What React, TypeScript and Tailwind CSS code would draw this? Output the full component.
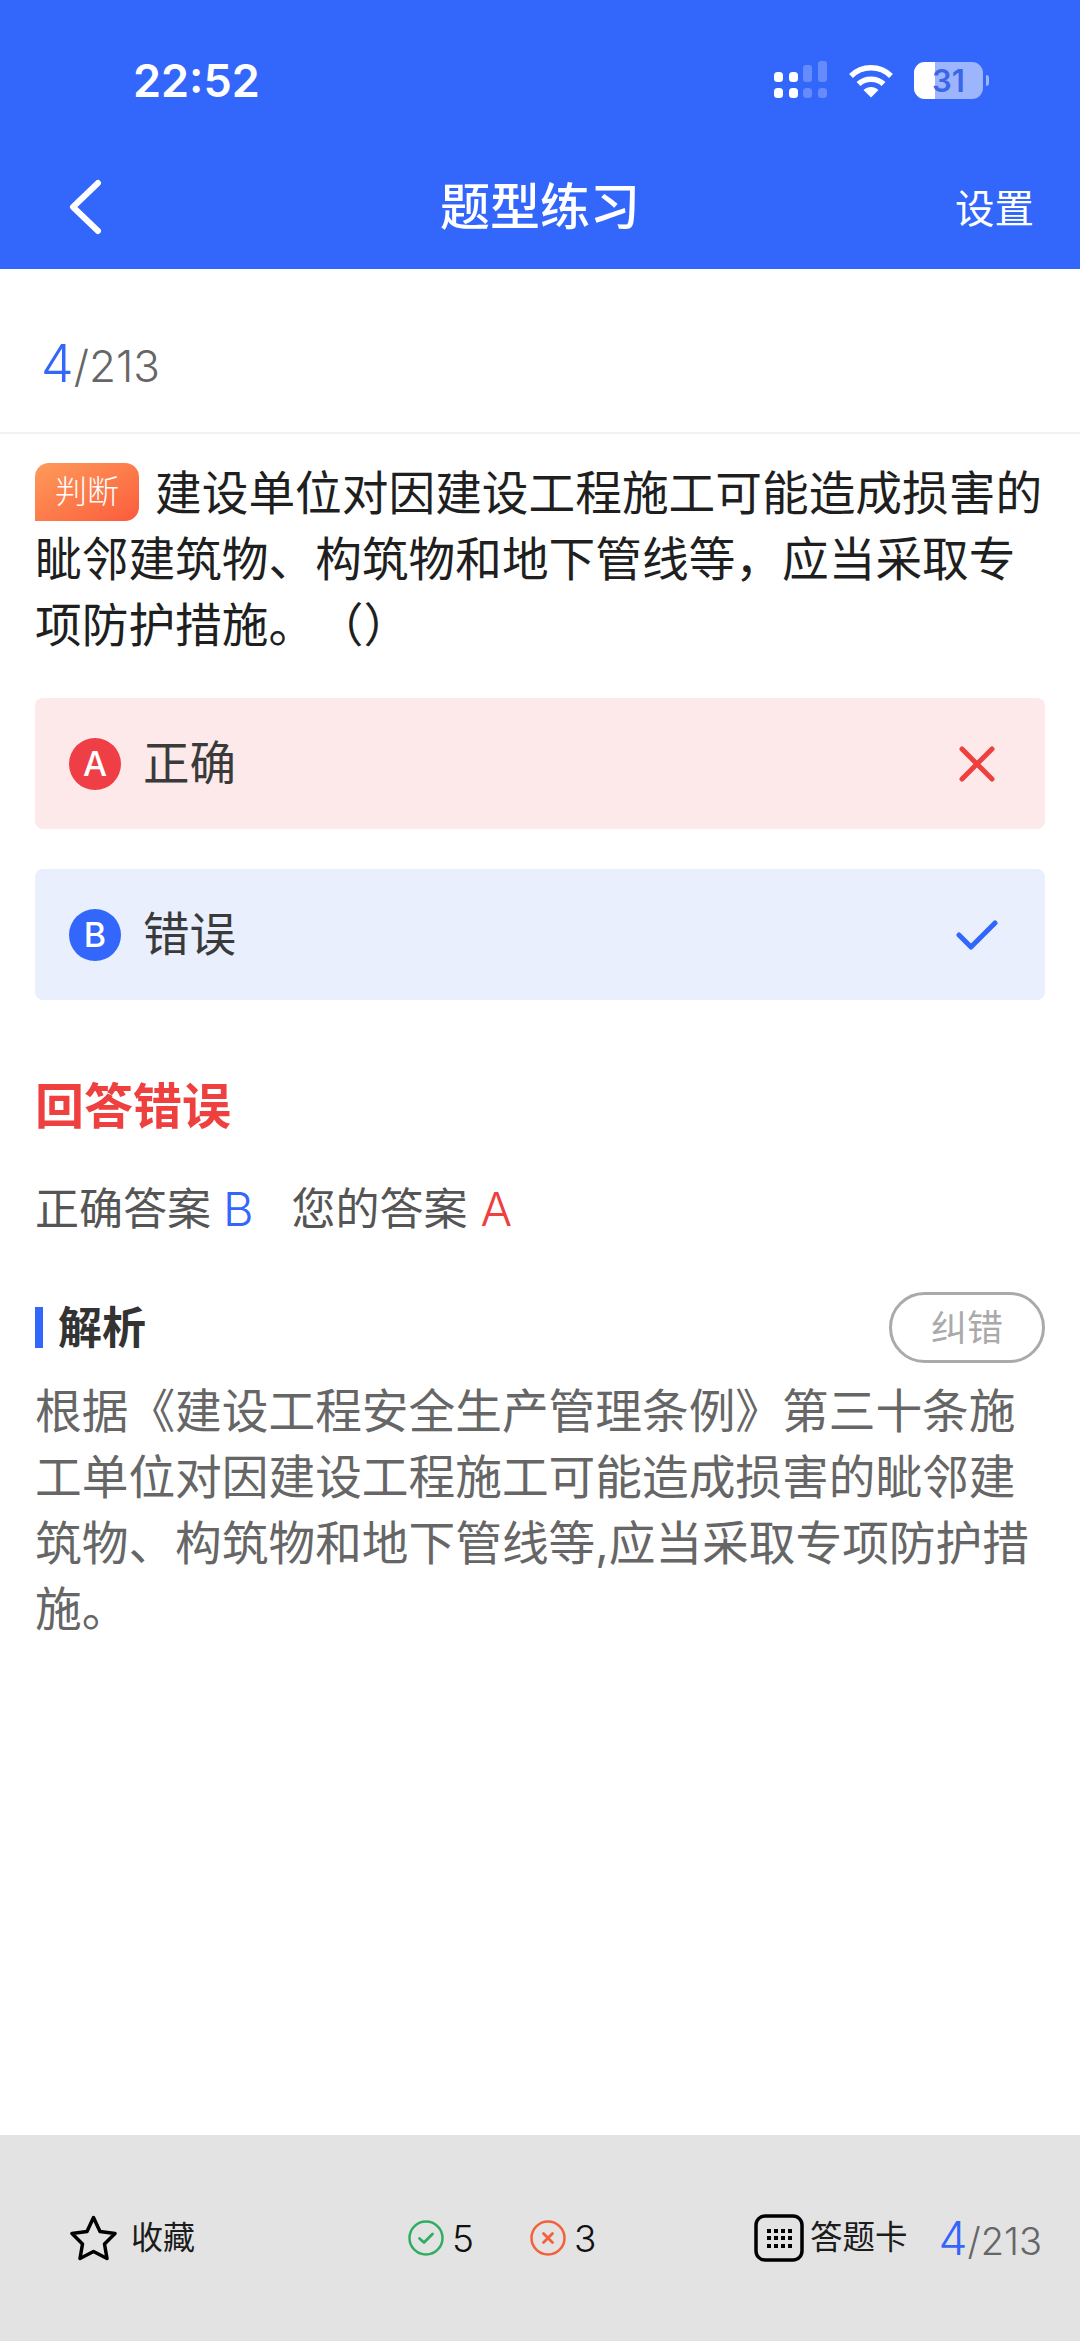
import React from "react";

const FONT = 'Inter, "Noto Sans CJK SC", sans-serif';

function Signal() {
  return (
    <svg width="54" height="38" viewBox="0 0 54 38" fill="#fff">
      <rect x="0" y="11" width="9" height="10" rx="3.5" />
      <rect x="15" y="11" width="9" height="10" rx="3.5" />
      <rect x="29" y="4" width="9" height="17" rx="3" opacity="0.25" />
      <rect x="44" y="0" width="9" height="21" rx="3" opacity="0.25" />
      <rect x="0" y="27" width="9" height="10" rx="3.5" />
      <rect x="15" y="27" width="9" height="10" rx="3.5" />
      <rect x="29" y="27" width="9" height="10" rx="3.5" opacity="0.25" />
      <rect x="44" y="27" width="9" height="10" rx="3.5" opacity="0.25" />
    </svg>
  );
}

function Wifi() {
  return (
    <svg width="46" height="35" viewBox="0 0 46 35" fill="none" stroke="#fff" strokeWidth="5.5">
      <path d="M3 13 C14 2 32 2 43 13" />
      <path d="M10.5 21 C17 14.5 29 14.5 35.5 21" />
      <path d="M15.5 27 L23 34.5 L30.5 27 C26 23 20 23 15.5 27 Z" fill="#fff" stroke="none" />
    </svg>
  );
}

function Battery() {
  return (
    <div className="relative flex items-center">
      <div className="relative flex h-[37px] w-[69px] items-center justify-center overflow-hidden rounded-[11px] bg-[#9db5fc]">
        <div className="absolute inset-y-0 left-0 w-[21px] bg-white" />
        <span className="relative text-[31px] font-semibold leading-none text-[#3a66ea]">31</span>
      </div>
      <div className="ml-[3px] h-[11px] w-[3px] rounded-r-full bg-[#9db5fc]" />
    </div>
  );
}

function Option({ letter, label, tone, icon }: { letter: string; label: string; tone: "red" | "blue"; icon: React.ReactNode }) {
  const red = tone === "red";
  return (
    <div className={`flex h-[131px] items-center rounded-[8px] pl-[34px] pr-[47px] ${red ? "bg-[#fde9e9]" : "bg-[#e9effd]"}`}>
      <div className={`flex h-[52px] w-[52px] items-center justify-center rounded-full text-[34px] font-medium leading-none text-white ${red ? "bg-[#ef3e46]" : "bg-[#3366fa]"}`}>
        {letter}
      </div>
      <span className="ml-[22px] text-[46.5px] leading-none text-[#3a3a3a]">{label}</span>
      <div className="ml-auto flex w-[42px] items-center justify-center">{icon}</div>
    </div>
  );
}

export default function App() {
  return (
    <div className="flex h-[2341px] w-[1080px] flex-col overflow-hidden bg-white" style={{ fontFamily: FONT }}>
      <header className="flex h-[269px] shrink-0 flex-col bg-[#3366fa] text-white">
        <div className="mt-[60px] flex h-[40px] items-center justify-between pl-[133px] pr-[91px]">
          <span className="text-[45px] font-semibold leading-none">22:52</span>
          <div className="flex items-center">
            <Signal />
            <div className="ml-[20px]"><Wifi /></div>
            <div className="ml-[20px]"><Battery /></div>
          </div>
        </div>
        <div className="mt-[77px] grid h-[60px] grid-cols-[1fr_auto_1fr] items-center px-[46px]">
          <svg className="ml-[20px]" width="40" height="56" viewBox="0 0 40 56" fill="none" stroke="#fff" strokeWidth="6" strokeLinecap="round" strokeLinejoin="round">
            <path d="M32 4 L7 28 L32 52" />
          </svg>
          <span className="text-[50px] font-medium leading-none">题型练习</span>
          <span className="mt-[5px] justify-self-end text-[39.5px] leading-none">设置</span>
        </div>
      </header>

      <main className="flex min-h-0 flex-1 flex-col">
        <div className="flex h-[165px] items-baseline border-b-2 border-[#f2f2f2] pl-[41px] pt-[69px] leading-none">
          <span className="text-[52px] font-light leading-none text-[#3366fa]">4</span>
          <span className="text-[44px] font-light leading-none text-[#666]">/213</span>
        </div>

        <div className="px-[35px]">
          <p className="mt-[26px] text-[46.7px] leading-[66px] text-[#1f1f1f]">
            <span className="mr-[16px] mt-[3px] inline-flex h-[58px] w-[104px] items-center justify-center rounded-[14px] rounded-bl-none bg-gradient-to-br from-[#fd9a5a] to-[#fb5a3c] align-top text-[32px] font-light leading-none text-white">
              判断
            </span>
            建设单位对因建设工程施工可能造成损害的眦邻建筑物、构筑物和地下管线等，应当采取专项防护措施。<span className="ml-[25px]">（）</span>
          </p>

          <div className="mt-[40px] flex flex-col gap-[40px]">
            <Option
              letter="A"
              label="正确"
              tone="red"
              icon={
                <svg width="36" height="36" viewBox="0 0 36 36" fill="none" stroke="#ef4040" strokeWidth="5" strokeLinecap="round">
                  <path d="M3 3 L33 33 M33 3 L3 33" />
                </svg>
              }
            />
            <Option
              letter="B"
              label="错误"
              tone="blue"
              icon={
                <svg width="42" height="30" viewBox="0 0 42 30" fill="none" stroke="#3366fa" strokeWidth="5" strokeLinecap="round" strokeLinejoin="round">
                  <path d="M3 15 L15 27 L39 3" />
                </svg>
              }
            />
          </div>

          <h2 className="mt-[82px] text-[49px] font-bold leading-none text-[#ef4040]">回答错误</h2>

          <div className="mt-[54px] flex items-center text-[44px] leading-none text-[#555]">
            <span>正确答案</span>
            <span className="ml-[12px] text-[47px] font-light leading-none text-[#3366fa]">B</span>
            <span className="ml-[38px]">您的答案</span>
            <span className="ml-[13px] text-[47px] font-light leading-none text-[#ef4040]">A</span>
          </div>

          <div className="mt-[60px] flex items-center justify-between">
            <div className="flex items-center">
              <div className="h-[41px] w-[8px] bg-[#3366fa]" />
              <span className="ml-[15px] text-[44px] font-bold leading-none text-[#333]">解析</span>
            </div>
            <div className="flex h-[71px] w-[156px] items-center justify-center rounded-full border-[3px] border-[#aaa] text-[36px] leading-none text-[#aaa]">
              纠错
            </div>
          </div>

          <p className="mt-[15px] text-[46.7px] leading-[66px] text-[#666]">
            根据《建设工程安全生产管理条例》第三十条施工单位对因建设工程施工可能造成损害的眦邻建筑物、构筑物和地下管线等,应当采取专项防护措施。
          </p>
        </div>
      </main>

      <footer className="flex h-[206px] shrink-0 bg-[#e3e3e3] pt-[80px]">
        <div className="flex h-[46px] w-full items-center pl-[70px] pr-[38px]">
          <svg width="47" height="46" viewBox="0 0 47 46" fill="none" stroke="#000" strokeWidth="3.5" strokeLinejoin="round">
            <path d="M23.5 2.5 L30 16.5 L45 18.5 L34.5 29 L37 43.5 L23.5 36.5 L10 43.5 L12.5 29 L2 18.5 L17 16.5 Z" />
          </svg>
          <span className="ml-[14px] text-[32px] leading-none text-[#1c1c1c]">收藏</span>

          <svg className="ml-[213px]" width="36" height="36" viewBox="0 0 36 36" fill="none" stroke="#2fae62">
            <circle cx="18" cy="18" r="16.5" strokeWidth="2.5" />
            <path d="M11.5 18.5 L16 22.5 L24.5 14" strokeWidth="2.8" strokeLinecap="round" strokeLinejoin="round" />
          </svg>
          <span className="ml-[8px] text-[37px] font-light leading-none text-[#111]">5</span>

          <svg className="ml-[56px]" width="36" height="36" viewBox="0 0 36 36" fill="none" stroke="#f4603c">
            <circle cx="18" cy="18" r="16.5" strokeWidth="2.5" />
            <path d="M13.5 13.5 L22.5 22.5 M22.5 13.5 L13.5 22.5" strokeWidth="2.8" strokeLinecap="round" />
          </svg>
          <span className="ml-[8px] text-[37px] font-light leading-none text-[#111]">3</span>

          <svg className="ml-auto" width="50" height="48" viewBox="0 0 50 48" fill="none">
            <rect x="2" y="2" width="46" height="44" rx="9" stroke="#000" strokeWidth="3.5" />
            <g fill="#000">
              <rect x="13" y="15" width="4" height="4" /><rect x="20" y="15" width="4" height="4" /><rect x="27" y="15" width="4" height="4" /><rect x="34" y="15" width="4" height="4" />
              <rect x="13" y="22" width="4" height="4" /><rect x="20" y="22" width="4" height="4" /><rect x="27" y="22" width="4" height="4" /><rect x="34" y="22" width="4" height="4" />
              <rect x="13" y="30" width="4" height="4" /><rect x="20" y="30" width="4" height="4" /><rect x="27" y="30" width="4" height="4" /><rect x="34" y="30" width="4" height="4" />
            </g>
          </svg>
          <span className="ml-[6px] text-[32.5px] leading-none text-[#1c1c1c]">答题卡</span>
          <div className="ml-[31px] flex items-baseline leading-none">
            <span className="text-[46px] font-light leading-none text-[#3366fa]">4</span>
            <span className="text-[38px] font-light leading-none text-[#666]">/213</span>
          </div>
        </div>
      </footer>
    </div>
  );
}
